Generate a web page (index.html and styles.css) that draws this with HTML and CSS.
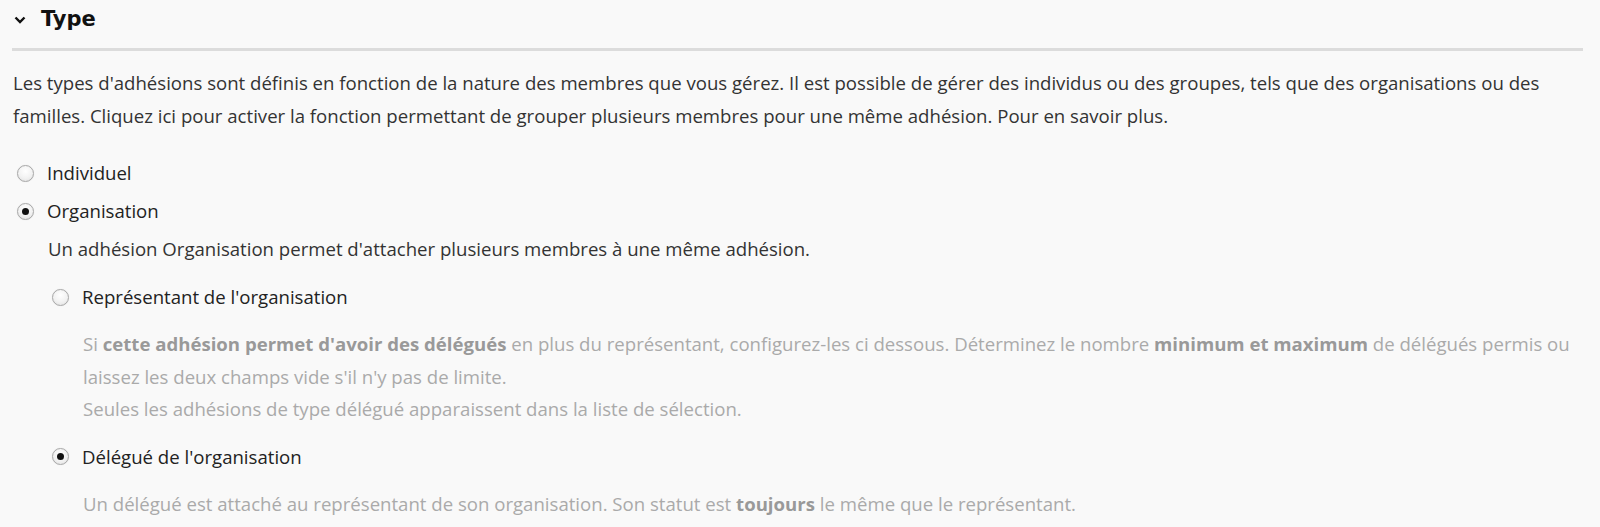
FILE: index.html
```html
<!DOCTYPE html>
<html lang="fr">
<head>
<meta charset="utf-8">
<link rel="stylesheet" href="styles.css">
</head>
<body>
<section class="panel">
  <div class="panel-head">
    <svg class="chev" width="12" height="8" viewBox="0 0 12 8"><path d="M1.5 1.5 L6 6 L10.5 1.5" fill="none" stroke="#111" stroke-width="2.4"/></svg>
    <h2 class="title">Type</h2>
  </div>
  <div class="rule"></div>
  <p class="intro">Les types d'adhésions sont définis en fonction de la nature des membres que vous gérez. Il est possible de gérer des individus ou des groupes, tels que des organisations ou des familles. Cliquez ici pour activer la fonction permettant de grouper plusieurs membres pour une même adhésion. Pour en savoir plus.</p>
  <div class="options">
    <label class="opt"><span class="radio"></span>Individuel</label>
    <label class="opt"><span class="radio on"></span>Organisation</label>
    <div class="sub">
      <p class="desc">Un adhésion Organisation permet d'attacher plusieurs membres à une même adhésion.</p>
      <label class="opt opt-rep"><span class="radio"></span>Représentant de l'organisation</label>
      <p class="help help-rep">Si <b>cette adhésion permet d'avoir des délégués</b> en plus du représentant, configurez-les ci dessous. Déterminez le nombre <b>minimum et maximum</b> de délégués permis ou laissez les deux champs vide s'il n'y pas de limite.<br>Seules les adhésions de type délégué apparaissent dans la liste de sélection.</p>
      <label class="opt opt-del"><span class="radio on"></span>Délégué de l'organisation</label>
      <p class="help help-del">Un délégué est attaché au représentant de son organisation. Son statut est <b>toujours</b> le même que le représentant.</p>
    </div>
  </div>
</section>
</body>
</html>
```
FILE: styles.css
```css
html, body { margin: 0; padding: 0; background: #f9f9f9; }
body { font-family: "Open Sans", "Liberation Sans", sans-serif; font-size: 18.6px; color: #333; }
.panel { width: 1571px; padding-left: 12px; }
.panel-head { display: flex; align-items: center; height: 38px; padding-left: 2px; }
.chev { margin-right: 15px; margin-top: 1px; }
.title { margin: 0; font-family: "DejaVu Sans", sans-serif; font-weight: bold; font-size: 21px; color: #111; }
.rule { height: 3px; background: #dcdcdc; margin-top: 10px; }
.intro { margin: 15px 0 0 1px; line-height: 33px; width: 1560px; }
.options { margin-top: 22px; display: flex; flex-direction: column; }
.opt { display: flex; align-items: center; height: 38px; line-height: 38px; color: #222; }
.radio { width: 15px; height: 15px; border-radius: 50%; border: 1px solid #a8a8a8; background: radial-gradient(circle at 50% 35%, #ffffff 0%, #f2f2f2 55%, #dedede 100%); margin: 0 13px 0 5px; position: relative; box-shadow: 0 0 1px rgba(0,0,0,0.15); flex: none; }
.radio.on::after { content: ""; position: absolute; left: 4px; top: 4px; width: 7px; height: 7px; border-radius: 50%; background: #111; }
.sub { padding-left: 35px; }
.desc { margin: 0 0 0 1px; line-height: 38px; color: #333; }
.opt-rep { margin-top: 10px; }
.opt-del { margin-top: 12px; }
.help { margin: 0 0 0 36px; line-height: 32.5px; color: #aaa; }
.help-rep { margin-top: 12px; }
.help-del { margin-top: 12px; }
.help b { color: #999; }
```
